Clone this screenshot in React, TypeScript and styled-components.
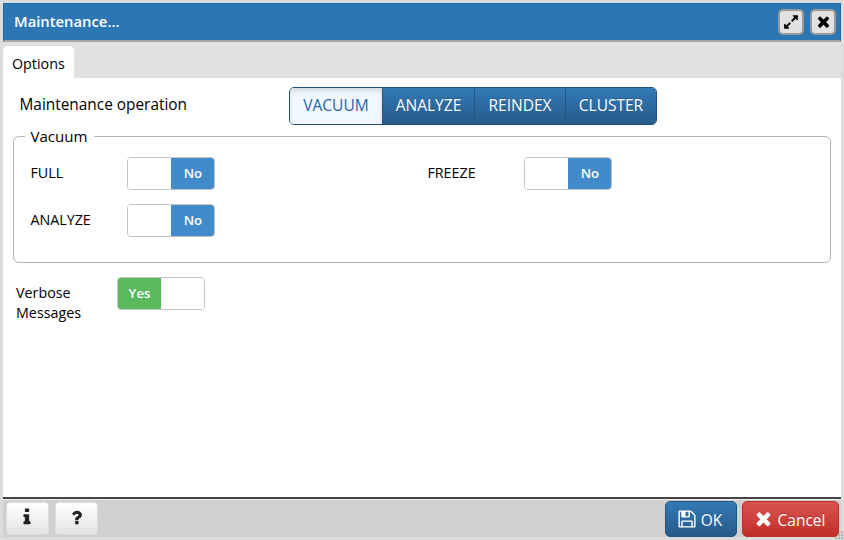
import React from "react";
import styled, { createGlobalStyle, css } from "styled-components";

const GlobalStyle = createGlobalStyle`
  * { box-sizing: border-box; }
  html, body { margin: 0; padding: 0; }
  body {
    background: #dcdcdc;
    color: #000;
    font-family: "Open Sans", "Noto Sans", sans-serif;
    overflow: hidden;
  }
  button { font-family: inherit; margin: 0; padding: 0; }
`;

const Dialog = styled.div`
  position: relative;
  width: 844px;
  height: 540px;
  padding: 3px 3px 0;
  display: flex;
  flex-direction: column;
  background: #dcdcdc;
`;

const Header = styled.header`
  height: 39px;
  flex: none;
  display: flex;
  align-items: center;
  gap: 6px;
  padding: 0 4px 1px 10px;
  background: #2c76b4;
  border: 1px solid #1b69aa;
  border-bottom: 2px solid #a5a5a8;
`;

const Title = styled.h1`
  flex: 1;
  margin: 0 0 2px;
  color: #fff;
  font-size: 14.8px;
  font-weight: 600;
  line-height: 20px;
`;

const HeaderButton = styled.button`
  width: 26px;
  height: 26px;
  display: flex;
  align-items: center;
  justify-content: center;
  background: #e2e2e2;
  border: 2px solid #999;
  border-radius: 5px;
`;

const TabBar = styled.nav`
  height: 36px;
  flex: none;
  display: flex;
  align-items: flex-end;
  background: #e1e1e1;
`;

const Tab = styled.div`
  width: 71px;
  height: 32px;
  padding-left: 9px;
  line-height: 36px;
  font-size: 14.3px;
  background: #fff;
  border-radius: 5px 5px 0 0;
`;

const Content = styled.main`
  flex: 1;
  background: #fff;
  padding: 8px 10px 0;
`;

const OperationRow = styled.div`
  display: flex;
  align-items: center;
  height: 39px;
`;

const OperationLabel = styled.div`
  width: 276px;
  padding: 0 0 3px 6.5px;
  font-size: 15.4px;
  font-weight: 500;
`;

const ButtonGroup = styled.div`
  display: flex;
  height: 38px;
  border: 1px solid #205081;
  border-radius: 5px;
  overflow: hidden;
`;

const OperationButton = styled.button<{ $active?: boolean; $width: number }>`
  width: ${(p) => p.$width}px;
  padding-bottom: 1px;
  border: 0;
  border-left: 1px solid #245580;
  background: linear-gradient(#337ab7, #265a88);
  color: #fff;
  font-size: 15.5px;
  font-weight: 500;
  text-shadow: 0 -1px 0 rgba(0, 0, 0, 0.2);
  &:first-child { border-left: 0; }
  ${(p) =>
    p.$active &&
    css`
      background: #f0f7ff;
      color: #2569a5;
      text-shadow: none;
      box-shadow: inset 0 3px 4px rgba(0, 0, 0, 0.12);
    `}
`;

const Group = styled.fieldset`
  height: 136px;
  margin: 2px 0 0;
  padding: 12px 0 0 16.4px;
  border: 1px solid #b4b4b4;
  border-radius: 6px;
  display: grid;
  grid-template-columns: 397px 1fr;
  grid-template-rows: 33px 33px;
  row-gap: 14px;
`;

const Legend = styled.legend`
  margin-left: -5px;
  padding: 0 6px 0 5px;
  font-size: 15.1px;
  line-height: 18px;
`;

const Field = styled.div`
  display: flex;
  align-items: flex-start;
`;

const FieldLabel = styled.label<{ $width: number; $offset: number }>`
  width: ${(p) => p.$width}px;
  padding-top: ${(p) => p.$offset}px;
  font-size: 14.3px;
  line-height: 20px;
`;

const VerboseRow = styled(Field)`
  margin: 14px 0 0 3px;
`;

const Toggle = styled.div`
  display: flex;
  width: 88px;
  height: 33px;
  border: 1px solid #c4c4c4;
  border-radius: 4px;
  overflow: hidden;
  background: #fff;
`;

const ToggleHalf = styled.span<{ $tone?: "on" | "off" }>`
  flex: 1;
  color: #fff;
  font-size: 13.2px;
  font-weight: 600;
  line-height: 31px;
  text-align: center;
  background: ${(p) =>
    p.$tone === "on" ? "#5cb85c" : p.$tone === "off" ? "#428bca" : "#fff"};
`;

const Footer = styled.footer`
  height: 43px;
  flex: none;
  display: flex;
  align-items: flex-start;
  padding: 3px 2px 0 3px;
  gap: 6px;
  border-top: 2px solid #454545;
  background: linear-gradient(#d0d0d0 38px, #dcdcdc 38px);
  box-shadow: inset 0 1px 0 #ededed;
`;

const Spacer = styled.div`
  flex: 1;
`;

const HelpButton = styled.button`
  width: 43px;
  height: 33px;
  padding: 0 1px 3px 0;
  display: flex;
  align-items: center;
  justify-content: center;
  border: 1px solid #dedede;
  border-radius: 4px;
  background: linear-gradient(#fff, #e3e3e3);
  color: #222;
`;

const ActionGroup = styled.div`
  display: flex;
  gap: 5px;
`;

const ActionButton = styled.button<{ $danger?: boolean }>`
  width: ${(p) => (p.$danger ? 97 : 72)}px;
  height: 36px;
  margin-top: -1px;
  padding: 0 3px 1px 0;
  display: flex;
  align-items: center;
  justify-content: center;
  gap: 4px;
  color: #fff;
  font-size: 15.5px;
  text-shadow: 0 -1px 0 rgba(0, 0, 0, 0.2);
  border: 1px solid ${(p) => (p.$danger ? "#b92c28" : "#245580")};
  border-radius: 5px;
  background: ${(p) =>
    p.$danger
      ? "linear-gradient(#d9534f, #c12e2a)"
      : "linear-gradient(#337ab7, #265a88)"};
`;

const ActionText = styled.span`
  padding-top: 3px;
`;

const ResizeGrip = styled.svg`
  position: absolute;
  right: 0;
  bottom: 0;
`;

const ICONS = {
  expand:
    "M883 1056q0 13-10 23l-332 332 144 144q19 19 19 45t-19 45-45 19h-448q-26 0-45-19t-19-45v-448q0-26 19-45t45-19 45 19l144 144 332-332q10-10 23-10t23 10l114 114q10 10 10 23zm781-864v448q0 26-19 45t-45 19-45-19l-144-144-332 332q-10 10-23 10t-23-10l-114-114q-10-10-10-23t10-23l332-332-144-144q-19-19-19-45t19-45 45-19h448q26 0 45 19t19 45z",
  times:
    "M1490 1322q0 40-28 68l-136 136q-28 28-68 28t-68-28l-294-294-294 294q-28 28-68 28t-68-28l-136-136q-28-28-28-68t28-68l294-294-294-294q-28-28-28-68t28-68l136-136q28-28 68-28t68 28l294 294 294-294q28-28 68-28t68 28l136 136q28 28 28 68t-28 68l-294 294 294 294q28 28 28 68z",
  info:
    "M1216 1344v128q0 26-19 45t-45 19h-512q-26 0-45-19t-19-45v-128q0-26 19-45t45-19h64v-384h-64q-26 0-45-19t-19-45v-128q0-26 19-45t45-19h384q26 0 45 19t19 45v576h64q26 0 45 19t19 45zm-128-1152v192q0 26-19 45t-45 19h-256q-26 0-45-19t-19-45v-192q0-26 19-45t45-19h256q26 0 45 19t19 45z",
  question:
    "M1088 1256v240q0 16-12 28t-28 12h-240q-16 0-28-12t-12-28v-240q0-16 12-28t28-12h240q16 0 28 12t12 28zm316-600q0 54-15.5 101t-35 76.5-55 59.5-57.5 43.5-61 35.5q-41 23-68.5 65t-27.5 67q0 17-12 32.5t-28 15.5h-240q-15 0-25.5-18.5t-10.5-37.5v-45q0-83 65-156.5t143-108.5q59-27 84-56t25-76q0-42-46.5-74t-107.5-32q-65 0-108 29-35 25-107 115-13 16-31 16-12 0-25-8l-164-125q-13-10-15.5-25t5.5-28q160-266 464-266 80 0 161 31t146 83 106 127.5 41 158.5z",
  save:
    "M512 1536h768v-384h-768v384zm896 0h128v-896q0-14-10-38.5t-20-34.5l-281-281q-10-10-34-20t-39-10v416q0 40-28 68t-68 28h-576q-40 0-68-28t-28-68v-416h-128v1280h128v-416q0-40 28-68t68-28h832q40 0 68 28t28 68v416zm-384-928v-320q0-13-9.5-22.5t-22.5-9.5h-192q-13 0-22.5 9.5t-9.5 22.5v320q0 13 9.5 22.5t22.5 9.5h192q13 0 22.5-9.5t9.5-22.5zm640 32v928q0 40-28 68t-68 28h-1344q-40 0-68-28t-28-68v-1344q0-40 28-68t68-28h928q40 0 88 20t76 48l280 280q28 28 48 76t20 88z",
};

function Icon({ name, size }: { name: keyof typeof ICONS; size: number }) {
  return (
    <svg width={size} height={size} viewBox="0 0 1792 1792" fill="currentColor" aria-hidden>
      <path d={ICONS[name]} />
    </svg>
  );
}

function Switch({ on }: { on?: boolean }) {
  return (
    <Toggle role="switch" aria-checked={!!on}>
      <ToggleHalf $tone={on ? "on" : undefined}>{on ? "Yes" : ""}</ToggleHalf>
      <ToggleHalf $tone={on ? undefined : "off"}>{on ? "" : "No"}</ToggleHalf>
    </Toggle>
  );
}

const OPERATIONS = [
  { name: "VACUUM", width: 92 },
  { name: "ANALYZE", width: 92 },
  { name: "REINDEX", width: 91 },
  { name: "CLUSTER", width: 91 },
];

export default function App() {
  return (
    <>
      <GlobalStyle />
      <Dialog role="dialog">
        <Header>
          <Title>Maintenance...</Title>
          <HeaderButton aria-label="Maximize"><Icon name="expand" size={16} /></HeaderButton>
          <HeaderButton aria-label="Close"><Icon name="times" size={17} /></HeaderButton>
        </Header>
        <TabBar>
          <Tab>Options</Tab>
        </TabBar>
        <Content>
          <OperationRow>
            <OperationLabel>Maintenance operation</OperationLabel>
            <ButtonGroup>
              {OPERATIONS.map((op, i) => (
                <OperationButton key={op.name} $width={op.width} $active={i === 0}>
                  {op.name}
                </OperationButton>
              ))}
            </ButtonGroup>
          </OperationRow>
          <Group>
            <Legend>Vacuum</Legend>
            {["FULL", "FREEZE", "ANALYZE"].map((name) => (
              <Field key={name}>
                <FieldLabel $width={97} $offset={6}>{name}</FieldLabel>
                <Switch />
              </Field>
            ))}
          </Group>
          <VerboseRow>
            <FieldLabel $width={101} $offset={6}>Verbose<br />Messages</FieldLabel>
            <Switch on />
          </VerboseRow>
        </Content>
        <Footer>
          <HelpButton aria-label="Information"><Icon name="info" size={20} /></HelpButton>
          <HelpButton aria-label="Help"><Icon name="question" size={19} /></HelpButton>
          <Spacer />
          <ActionGroup>
            <ActionButton><Icon name="save" size={20} /><ActionText>OK</ActionText></ActionButton>
            <ActionButton $danger><Icon name="times" size={21} /><ActionText>Cancel</ActionText></ActionButton>
          </ActionGroup>
        </Footer>
        <ResizeGrip width="10" height="10" viewBox="0 0 10 10" fill="#b4b4b4" aria-hidden>
          <path d="M7 1h2v2h-2zM4 4h2v2h-2zM7 4h2v2h-2zM1 7h2v2h-2zM4 7h2v2h-2zM7 7h2v2h-2z" />
        </ResizeGrip>
      </Dialog>
    </>
  );
}
